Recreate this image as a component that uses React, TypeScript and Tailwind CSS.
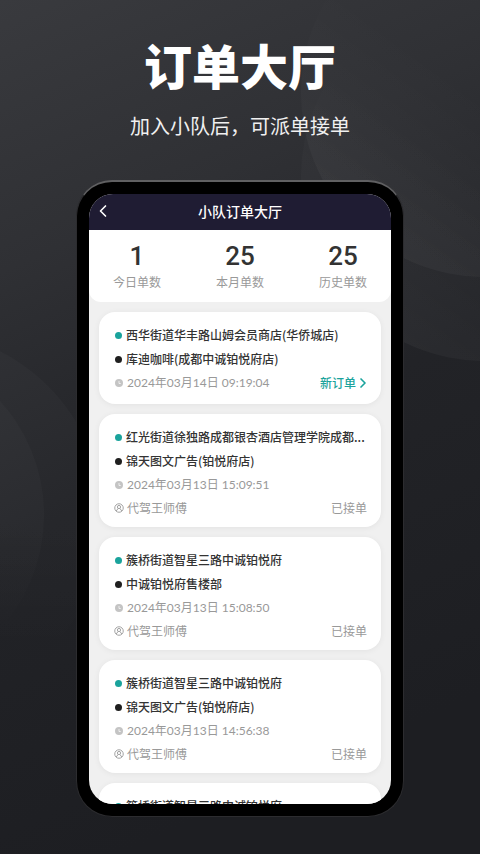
import { ChevronLeft, ChevronRight } from 'lucide-react';

type Order = {
  from: string;
  to: string;
  time: string;
  driver?: string;
};

const stats = [
  { value: '1', label: '今日单数' },
  { value: '25', label: '本月单数' },
  { value: '25', label: '历史单数' },
];

const orders: Order[] = [
  { from: '西华街道华丰路山姆会员商店(华侨城店)', to: '库迪咖啡(成都中诚铂悦府店)', time: '2024年03月14日 09:19:04' },
  { from: '红光街道徐独路成都银杏酒店管理学院成都...', to: '锦天图文广告(铂悦府店)', time: '2024年03月13日 15:09:51', driver: '代驾王师傅' },
  { from: '簇桥街道智星三路中诚铂悦府', to: '中诚铂悦府售楼部', time: '2024年03月13日 15:08:50', driver: '代驾王师傅' },
  { from: '簇桥街道智星三路中诚铂悦府', to: '锦天图文广告(铂悦府店)', time: '2024年03月13日 14:56:38', driver: '代驾王师傅' },
  { from: '簇桥街道智星三路中诚铂悦府', to: '锦天图文广告(铂悦府店)', time: '2024年03月13日 14:50:12', driver: '代驾王师傅' },
];

function ClockIcon() {
  return (
    <svg viewBox="0 0 16 16" className="size-2 shrink-0" aria-hidden="true">
      <circle cx="8" cy="8" r="8" fill="#c4c4c4" />
      <path d="M8 4v5h3.5" fill="none" stroke="#fff" strokeWidth="1.4" />
    </svg>
  );
}

function DriverIcon() {
  return (
    <svg viewBox="0 0 20 20" className="-mx-px size-[10px] shrink-0" fill="none" stroke="#999" strokeWidth="1.8" aria-hidden="true">
      <circle cx="10" cy="10" r="8.5" />
      <circle cx="10" cy="8" r="3.2" />
      <path d="M4.5 16 8 11M15.5 16 12 11" />
    </svg>
  );
}

function Backdrop() {
  return (
    <svg viewBox="0 0 480 854" preserveAspectRatio="xMidYMin slice" className="absolute inset-0 -z-10 size-full" aria-hidden="true">
      <defs>
        <linearGradient id="base" x1="0" y1="0" x2="0.25" y2="1">
          <stop offset="0" stopColor="#393a3e" />
          <stop offset="0.3" stopColor="#2f3034" />
          <stop offset="0.6" stopColor="#222327" />
          <stop offset="1" stopColor="#1d1e22" />
        </linearGradient>
        <linearGradient id="left" x1="0" y1="0" x2="0" y2="1">
          <stop offset="0" stopColor="#fff" stopOpacity="0.02" />
          <stop offset="0.5" stopColor="#fff" stopOpacity="0.02" />
          <stop offset="0.85" stopColor="#fff" stopOpacity="0" />
        </linearGradient>
        <linearGradient id="right" x1="0.1" y1="0.8" x2="0.38" y2="0.42">
          <stop offset="0" stopColor="#fff" stopOpacity="0.035" />
          <stop offset="1" stopColor="#fff" stopOpacity="0" />
        </linearGradient>
      </defs>
      <rect width="480" height="854" fill="url(#base)" />
      <circle cx="-85" cy="519" r="188" fill="url(#left)" />
      <circle cx="-126" cy="515" r="170" fill="url(#left)" />
      <circle cx="485" cy="93" r="184" fill="url(#right)" />
      <circle cx="485" cy="177" r="184" fill="url(#right)" />
    </svg>
  );
}

function OrderCard({ order }: { order: Order }) {
  return (
    <li className="rounded-2xl bg-white pt-[11px] pr-[14px] pb-[9px] pl-4 shadow-[0_1px_6px_rgba(0,0,0,0.06)]">
      <div className="flex h-6 items-center gap-1">
        <span className="size-[7px] shrink-0 rounded-full bg-[#1aa39c]" />
        <p className="whitespace-nowrap">{order.from}</p>
      </div>
      <div className="flex h-6 items-center gap-1">
        <span className="size-[7px] shrink-0 rounded-full bg-[#1f1f1f]" />
        <p className="whitespace-nowrap">{order.to}</p>
      </div>
      <div className="flex h-6 items-center gap-1 font-normal text-[#999]">
        <ClockIcon />
        <time className="font-[Lato,'Noto_Sans_CJK_SC',sans-serif]">{order.time}</time>
        {!order.driver && (
          <button type="button" className="ml-auto flex items-center font-medium text-[#1aa39c]">
            新订单
            <ChevronRight className="-mr-1 -ml-px size-4" strokeWidth={2.5} />
          </button>
        )}
      </div>
      {order.driver && (
        <div className="flex h-[21px] items-center gap-1 font-normal text-[#999]">
          <DriverIcon />
          <span>{order.driver}</span>
          <span className="ml-auto">已接单</span>
        </div>
      )}
    </li>
  );
}

export default function App() {
  return (
    <main className="relative isolate min-h-screen overflow-hidden bg-[#222327] px-[76px] pb-9 font-['Noto_Sans_CJK_SC',sans-serif]">
      <Backdrop />
      <h1 className="pt-8 text-center text-5xl leading-[64px] font-black whitespace-nowrap text-white">订单大厅</h1>
      <p className="mt-4 text-center text-xl leading-7 whitespace-nowrap text-[#f0f0f0]">加入小队后，可派单接单</p>

      <section className="mt-10 rounded-[36px] border border-t-2 border-[#2c2c2f] border-t-[#606062] bg-black p-3">
        <div className="h-[610px] overflow-hidden rounded-[24px] bg-[#f0f0f0] text-xs font-medium text-[#333]">
          <header className="grid h-9 grid-cols-[20px_1fr_20px] items-center bg-[#1f1c33] px-1 pb-[2px] text-white">
            <button type="button" aria-label="返回">
              <ChevronLeft className="size-5" />
            </button>
            <h2 className="text-center text-sm">小队订单大厅</h2>
          </header>
          <dl className="flex justify-between rounded-b-xl bg-white px-6 pt-2 pb-3 text-center">
            {stats.map((s) => (
              <div key={s.label} className="flex flex-col-reverse">
                <dt className="leading-4 font-normal text-[#999]">{s.label}</dt>
                <dd className="font-[Roboto,sans-serif] text-[26px] leading-9">{s.value}</dd>
              </div>
            ))}
          </dl>
          <ul className="flex flex-col gap-[10px] p-[10px]">
            {orders.map((o) => (
              <OrderCard key={o.time} order={o} />
            ))}
          </ul>
        </div>
      </section>
    </main>
  );
}
